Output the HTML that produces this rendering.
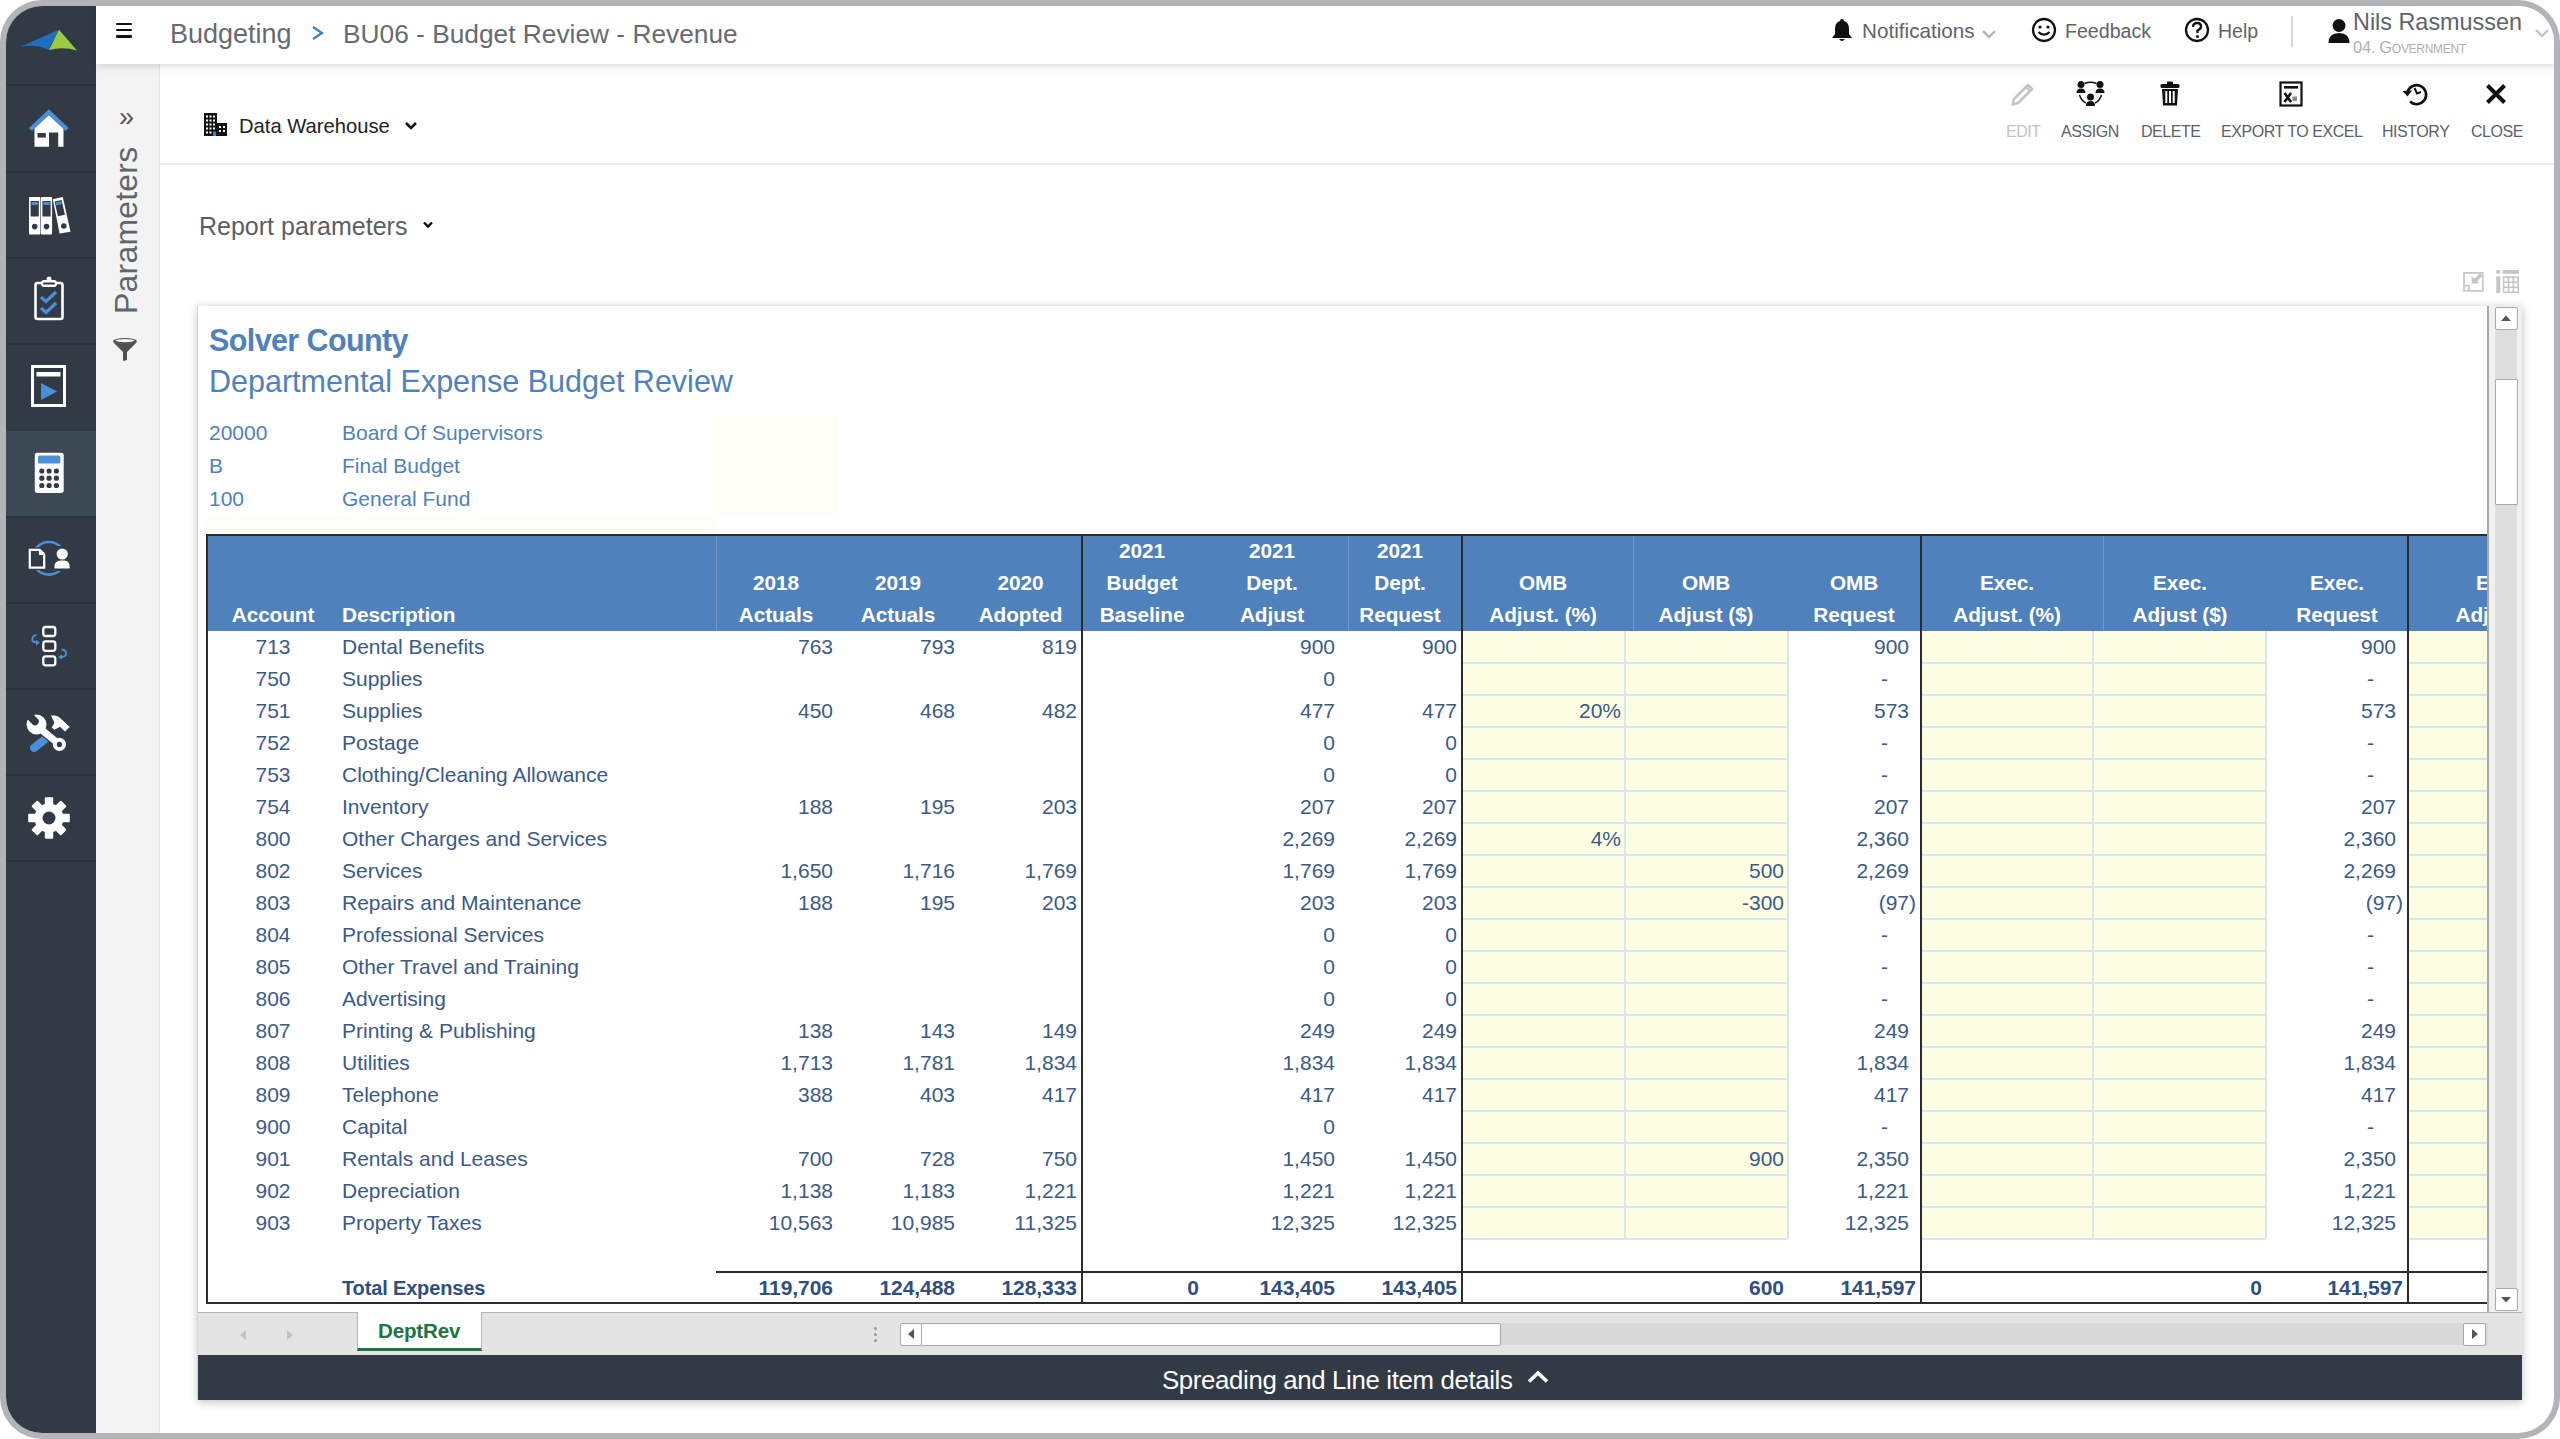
<!DOCTYPE html>
<html><head><meta charset="utf-8">
<style>
*{box-sizing:border-box;margin:0;padding:0}
html,body{width:2560px;height:1439px;overflow:hidden;background:#fff;font-family:"Liberation Sans",sans-serif}
.a{position:absolute}
#outer{position:absolute;left:0;top:0;width:2560px;height:1439px;border-radius:42px;background:#b3b4b8;overflow:hidden}
#inner{position:absolute;left:6px;top:6px;width:2548px;height:1427px;border-radius:36px;overflow:hidden;background:#fff}
#page{position:absolute;left:-6px;top:-6px;width:2560px;height:1439px}
#side{position:absolute;left:0;top:0;width:96px;height:1439px;background:#323a45}
.sep{position:absolute;left:0;width:96px;height:2px;background:#2b323b}
#top{position:absolute;left:96px;top:0;width:2464px;height:64px;background:#fff;box-shadow:0 2px 8px rgba(0,0,0,.15);z-index:5}
#params{position:absolute;left:96px;top:64px;width:64px;height:1375px;background:#f3f3f3;border-right:1px solid #e4e4e4}
.tbl{position:absolute;top:123px;font-size:16px;color:#5b616a;letter-spacing:-0.45px;white-space:nowrap;line-height:18px}
.c{position:absolute;font-size:21px;line-height:32px;white-space:nowrap}
.tt{position:absolute;font-size:21px;color:#5f636a;white-space:nowrap;line-height:24px}
</style></head>
<body>
<div id="outer"><div id="inner"><div id="page">

<!-- ============ SIDEBAR ============ -->
<div id="side">
  <svg class="a" style="left:18px;top:26px" width="64" height="28" viewBox="0 0 64 28">
    <path d="M3 20.5 L41 3.7 L30.5 24 Q20 18 3 20.5Z" fill="#1f6fc0"/>
    <path d="M41 3.7 L59 24.6 Q45 20 31 24Z" fill="#9bcb42"/>
  </svg>
  <div class="sep" style="top:84px"></div>
  <div class="sep" style="top:171px"></div>
  <div class="sep" style="top:257px"></div>
  <div class="sep" style="top:343px"></div>
  <div class="a" style="left:0;top:431px;width:96px;height:85px;background:#3d4855"></div>
  <div class="sep" style="top:516px"></div>
  <div class="sep" style="top:602px"></div>
  <div class="sep" style="top:688px"></div>
  <div class="sep" style="top:774px"></div>
  <div class="sep" style="top:860px"></div>
  <!-- home -->
  <svg class="a" style="left:24px;top:104px" width="50" height="48" viewBox="24 104 50 48">
    <path d="M34.5 126 L48.8 113 L63.5 126 L63.5 146.8 L58.2 146.8 L58.2 132.5 L49 132.5 L49 146.8 L34.5 146.8Z" fill="#fff"/>
    <rect x="37.5" y="133" width="8.3" height="4.6" fill="#323a45"/>
    <path d="M30.5 129.5 L48.8 112.3 L67.2 129.5" fill="none" stroke="#4a8fd8" stroke-width="4.4" stroke-linejoin="miter"/>
  </svg>
  <!-- binders -->
  <svg class="a" style="left:26px;top:194px" width="48" height="44" viewBox="0 0 48 44">
    <rect x="3" y="3" width="11.3" height="37.5" rx="1" fill="#fff"/>
    <rect x="14.8" y="3" width="11.3" height="37.5" rx="1" fill="#fff"/>
    <path d="M26.8 5.2 L36.8 3 L44.5 37.8 L33.6 39.6Z" fill="#fff"/>
    <rect x="4.6" y="7" width="8.2" height="15.5" fill="#323a45"/>
    <rect x="16.4" y="7" width="8.2" height="15.5" fill="#323a45"/>
    <path d="M28.6 7.5 L35.6 6 L38.9 20.8 L31.9 22.3Z" fill="#323a45"/>
    <rect x="5.6" y="8" width="6.2" height="3" fill="#4a8fd8"/>
    <rect x="17.4" y="8" width="6.2" height="3" fill="#4a8fd8"/>
    <path d="M29.6 8.5 L35.2 7.3 L35.8 10 L30.2 11.2Z" fill="#4a8fd8"/>
    <circle cx="8.7" cy="32.6" r="2.8" fill="#323a45"/>
    <circle cx="20.5" cy="32.6" r="2.8" fill="#323a45"/>
    <circle cx="37.8" cy="32" r="2.8" fill="#323a45"/>
  </svg>
  <!-- clipboard -->
  <svg class="a" style="left:30px;top:275px" width="38" height="48" viewBox="0 0 38 48">
    <rect x="5.5" y="8" width="27" height="36" rx="2" fill="none" stroke="#fff" stroke-width="2.6"/>
    <rect x="11" y="5" width="16" height="7" rx="3" fill="#fff"/>
    <circle cx="19" cy="4" r="2.5" fill="#fff"/>
    <rect x="13" y="7.5" width="12" height="2" rx="1" fill="#323a45"/>
    <path d="M11 22 L16 26.5 L26 17" fill="none" stroke="#4a8fd8" stroke-width="3.2"/>
    <path d="M11 33 L16 37.5 L26 28" fill="none" stroke="#4a8fd8" stroke-width="3.2"/>
  </svg>
  <!-- play window -->
  <svg class="a" style="left:29px;top:362px" width="40" height="48" viewBox="0 0 40 48">
    <rect x="3.5" y="4.5" width="32" height="39" fill="none" stroke="#fff" stroke-width="3"/>
    <rect x="7.5" y="10" width="24" height="4.5" fill="#fff"/>
    <path d="M12 21 L28 29.5 L12 38Z" fill="#4a8fd8"/>
  </svg>
  <!-- calculator -->
  <svg class="a" style="left:30px;top:448px" width="38" height="48" viewBox="30 448 38 48">
    <rect x="34.8" y="452.7" width="28.9" height="40.2" rx="2.6" fill="#fff"/>
    <rect x="38" y="455.6" width="22.3" height="8" rx="1.6" fill="#4a8fd8"/>
    <g fill="#323a45">
      <circle cx="41.8" cy="471" r="2.6"/><circle cx="49.1" cy="471" r="2.6"/><circle cx="56.4" cy="471" r="2.6"/>
      <circle cx="41.8" cy="478.2" r="2.6"/><circle cx="49.1" cy="478.2" r="2.6"/><circle cx="56.4" cy="478.2" r="2.6"/>
      <circle cx="41.8" cy="485.5" r="2.6"/><circle cx="49.1" cy="485.5" r="2.6"/><circle cx="56.4" cy="485.5" r="2.6"/>
    </g>
  </svg>
  <!-- doc person -->
  <svg class="a" style="left:24px;top:536px" width="50" height="46" viewBox="24 536 50 46">
    <circle cx="48.9" cy="558.3" r="16.3" fill="none" stroke="#4a8fd8" stroke-width="2.6"/>
    <path d="M27.5 547.5 L40.5 547.5 L46.5 553.5 L46.5 570 L27.5 570Z" fill="#323a45"/>
    <path d="M29.8 549.8 L39.8 549.8 L44.2 554.2 L44.2 567.6 L29.8 567.6Z" fill="#323a45" stroke="#fff" stroke-width="2.2"/>
    <path d="M39.5 550 L39.5 554.5 L44 554.5" fill="#fff" stroke="#fff" stroke-width="1.2"/>
    <rect x="52" y="546" width="19.5" height="25" fill="#323a45"/>
    <circle cx="62.2" cy="554" r="5.6" fill="#fff"/>
    <path d="M54.4 568.6 Q53.8 561 60 560.5 L64.5 560.5 Q70.5 561 69.6 568.6Z" fill="#fff"/>
  </svg>
  <!-- flow -->
  <svg class="a" style="left:26px;top:620px" width="46" height="50" viewBox="26 620 46 50">
    <rect x="43.3" y="627" width="12" height="9" rx="2.3" fill="none" stroke="#fff" stroke-width="2.3"/>
    <rect x="43.3" y="641.3" width="12" height="9.5" rx="2.3" fill="none" stroke="#fff" stroke-width="2.3"/>
    <rect x="43.3" y="656.3" width="12" height="9" rx="2.3" fill="none" stroke="#fff" stroke-width="2.3"/>
    <path d="M36.5 635 Q31.5 636 32.5 640.5 Q33.5 642.5 37 642.5" fill="none" stroke="#4a8fd8" stroke-width="1.9"/>
    <path d="M36 639.8 L40 642.6 L36 645.4Z" fill="#4a8fd8"/>
    <path d="M61.5 649.5 Q67 650 66 654.5 Q65 657 61.5 657" fill="none" stroke="#4a8fd8" stroke-width="1.9"/>
    <path d="M62 654.2 L58 657 L62 659.8Z" fill="#4a8fd8"/>
  </svg>
  <!-- tools -->
  <svg class="a" style="left:24px;top:708px" width="50" height="46" viewBox="24 708 50 46">
    <path d="M46 738.5 L34 748" stroke="#4a8fd8" stroke-width="8" stroke-linecap="round"/>
    <path d="M50 715 L55 714.7 Q59 715.5 62.5 719.4 L70.6 726.9 L65 732.5 L60 727.5 L54.4 730.6 L51 727.5 L53.8 723 Z" fill="#fff" stroke="#323a45" stroke-width="1.2"/>
    <g>
      <path d="M43 731 L59.4 744.4" stroke="#323a45" stroke-width="9.5" stroke-linecap="round"/>
      <circle cx="36.5" cy="724.5" r="11.2" fill="#323a45"/>
      <path d="M43 731 L59.4 744.4" stroke="#fff" stroke-width="7" stroke-linecap="round"/>
      <circle cx="36.5" cy="724.5" r="10" fill="#fff"/>
      <circle cx="59.4" cy="744.4" r="6.6" fill="#fff"/>
      <path d="M35 721.5 L23 709.5" stroke="#323a45" stroke-width="7.5" stroke-linecap="round"/>
      <circle cx="59.4" cy="744.4" r="2.6" fill="#323a45"/>
    </g>
  </svg>
  <!-- gear -->
  <svg class="a" style="left:27px;top:796px" width="44" height="44" viewBox="-22 -22 44 44">
    <g fill="#fff">
      <circle r="14.5"/>
      <rect x="-4.2" y="-20.8" width="8.4" height="9" rx="1"/>
      <rect x="-4.2" y="-20.8" width="8.4" height="9" rx="1" transform="rotate(45)"/>
      <rect x="-4.2" y="-20.8" width="8.4" height="9" rx="1" transform="rotate(90)"/>
      <rect x="-4.2" y="-20.8" width="8.4" height="9" rx="1" transform="rotate(135)"/>
      <rect x="-4.2" y="-20.8" width="8.4" height="9" rx="1" transform="rotate(180)"/>
      <rect x="-4.2" y="-20.8" width="8.4" height="9" rx="1" transform="rotate(225)"/>
      <rect x="-4.2" y="-20.8" width="8.4" height="9" rx="1" transform="rotate(270)"/>
      <rect x="-4.2" y="-20.8" width="8.4" height="9" rx="1" transform="rotate(315)"/>
    </g>
    <circle r="6.5" fill="#323a45"/>
  </svg>
</div>

<!-- ============ TOP BAR ============ -->
<div id="top"></div>
<div class="a" style="left:0;top:0;width:2560px;height:64px;z-index:6">
  <!-- hamburger -->
  <div class="a" style="left:116px;top:23px;width:16px;height:2.3px;background:#111;border-radius:1px"></div>
  <div class="a" style="left:116px;top:29.2px;width:16px;height:2.3px;background:#111;border-radius:1px"></div>
  <div class="a" style="left:116px;top:35.4px;width:16px;height:2.3px;background:#111;border-radius:1px"></div>
  <div class="tt" style="left:170px;top:18.5px;font-size:27px;line-height:30px;color:#676b71">Budgeting</div>
  <svg class="a" style="left:311px;top:25px" width="14" height="16" viewBox="0 0 14 16"><path d="M2 2 L11 8 L2 14" fill="none" stroke="#2f7fd6" stroke-width="2.2"/></svg>
  <div class="tt" style="left:343px;top:18.5px;font-size:26.3px;line-height:30px;color:#676b71">BU06 - Budget Review - Revenue</div>

  <!-- notifications -->
  <svg class="a" style="left:1830px;top:17px" width="24" height="26" viewBox="0 0 24 26">
    <path d="M12 2 Q14 2 14 4 Q19 5.5 19 12 L19 17 L22 21 L2 21 L5 17 L5 12 Q5 5.5 10 4 Q10 2 12 2Z" fill="#111"/>
    <path d="M9 22 Q12 26 15 22Z" fill="#111"/>
  </svg>
  <div class="tt" style="left:1862px;top:19px;font-size:20.7px;color:#5f636a">Notifications</div>
  <svg class="a" style="left:1981px;top:28px" width="16" height="12" viewBox="0 0 16 12"><path d="M2 3 L8 9 L14 3" fill="none" stroke="#b5b5b5" stroke-width="2.4"/></svg>
  <!-- feedback -->
  <svg class="a" style="left:2030px;top:17px" width="28" height="26" viewBox="0 0 28 26">
    <circle cx="14" cy="13" r="11" fill="none" stroke="#111" stroke-width="2.3"/>
    <circle cx="10" cy="10" r="1.6" fill="#111"/><circle cx="18" cy="10" r="1.6" fill="#111"/>
    <path d="M8.5 15 Q14 20.5 19.5 15" fill="none" stroke="#111" stroke-width="2.2"/>
  </svg>
  <div class="tt" style="left:2065px;top:19px;font-size:19.6px;color:#5f636a">Feedback</div>
  <!-- help -->
  <svg class="a" style="left:2183px;top:17px" width="28" height="26" viewBox="0 0 28 26">
    <circle cx="14" cy="13" r="11" fill="none" stroke="#111" stroke-width="2.3"/>
    <path d="M10 10 Q10 6 14 6 Q18 6 18 9.5 Q18 12 14.5 13.5 L14.5 16" fill="none" stroke="#111" stroke-width="2.4"/>
    <circle cx="14.5" cy="19.5" r="1.6" fill="#111"/>
  </svg>
  <div class="tt" style="left:2218px;top:19px;font-size:19.5px;color:#5f636a">Help</div>
  <div class="a" style="left:2291px;top:16px;width:1.5px;height:31px;background:#d8d8d8"></div>
  <!-- user -->
  <svg class="a" style="left:2327px;top:18px" width="24" height="27" viewBox="0 0 24 27">
    <circle cx="12" cy="7.5" r="6.5" fill="#111"/>
    <path d="M1.5 25 Q1.5 15 12 15 Q22.5 15 22.5 25Z" fill="#111"/>
  </svg>
  <div class="tt" style="left:2353px;top:9px;font-size:23.4px;line-height:26px;color:#5f636a">Nils Rasmussen</div>
  <div class="tt" style="left:2353px;top:39px;font-size:16.5px;line-height:16px;color:#b0b0b0;font-variant:small-caps;letter-spacing:-0.3px">04. Government</div>
  <svg class="a" style="left:2534px;top:27px" width="16" height="12" viewBox="0 0 16 12"><path d="M2 3 L8 9 L14 3" fill="none" stroke="#c4c4c4" stroke-width="2.4"/></svg>
</div>

<!-- ============ PARAMS PANEL ============ -->
<div id="params"></div>
<div class="a" style="left:119px;top:104px;font-size:27px;color:#555;line-height:27px">&#187;</div>
<div class="a" style="left:110px;top:314px;transform-origin:0 0;transform:rotate(-90deg);font-size:32px;line-height:32px;color:#60656b;white-space:nowrap;letter-spacing:0.2px">Parameters</div>
<svg class="a" style="left:111px;top:337px" width="28" height="26" viewBox="0 0 28 26">
  <ellipse cx="14" cy="4" rx="12" ry="3" fill="#505050"/>
  <ellipse cx="14" cy="3.6" rx="9.5" ry="1.6" fill="#f3f3f3"/>
  <path d="M2 5 L12 15 L12 24 L16 23 L16 15 L26 5 Q14 8 2 5Z" fill="#505050"/>
</svg>

<!-- ============ TOOLBAR ============ -->
<div class="a" style="left:160px;top:163px;width:2400px;height:1.5px;background:#ececec"></div>
<svg class="a" style="left:203px;top:112px" width="26" height="26" viewBox="0 0 26 26">
  <rect x="1" y="1" width="13" height="23" fill="#111"/>
  <rect x="14" y="11" width="10" height="13" fill="#111"/>
  <g fill="#fff">
    <rect x="3" y="3.5" width="2" height="2"/><rect x="6.5" y="3.5" width="2" height="2"/><rect x="10" y="3.5" width="2" height="2"/>
    <rect x="3" y="7.5" width="2" height="2"/><rect x="6.5" y="7.5" width="2" height="2"/><rect x="10" y="7.5" width="2" height="2"/>
    <rect x="3" y="11.5" width="2" height="2"/><rect x="6.5" y="11.5" width="2" height="2"/><rect x="10" y="11.5" width="2" height="2"/>
    <rect x="3" y="15.5" width="2" height="2"/><rect x="6.5" y="15.5" width="2" height="2"/><rect x="10" y="15.5" width="2" height="2"/>
    <rect x="3" y="19.5" width="2" height="2"/><rect x="6.5" y="19.5" width="2" height="2"/>
    <rect x="16" y="14" width="2" height="2"/><rect x="20" y="14" width="2" height="2"/>
    <rect x="16" y="18" width="2" height="2"/><rect x="20" y="18" width="2" height="2"/>
  </g>
  <rect x="10" y="19.5" width="3" height="4.5" fill="#3a7fd0"/>
</svg>
<div class="tt" style="left:239px;top:114px;font-size:20.2px;color:#222">Data Warehouse</div>
<svg class="a" style="left:403px;top:119px" width="16" height="14" viewBox="0 0 16 14"><path d="M3 4 L8 9 L13 4" fill="none" stroke="#111" stroke-width="2.6"/></svg>

<!-- toolbar buttons -->
<svg class="a" style="left:2009px;top:81px" width="27" height="26" viewBox="0 0 27 26">
  <path d="M5 18 L19 4 L23 8 L9 22 L3.5 23.5Z" fill="none" stroke="#c4c4c4" stroke-width="2.6" stroke-linejoin="round"/>
  <path d="M17 6 L21 10" stroke="#c4c4c4" stroke-width="2"/>
</svg>
<div class="tbl" style="left:2006px;color:#c2c2c2">EDIT</div>
<svg class="a" style="left:2076px;top:80px" width="29" height="28" viewBox="0 0 29 28">
  <g fill="#111">
    <circle cx="5" cy="4.5" r="3.5"/><path d="M0.5 13 Q0.5 8.5 5 8.5 Q9.5 8.5 9.5 13Z"/>
    <circle cx="24" cy="4.5" r="3.5"/><path d="M19.5 13 Q19.5 8.5 24 8.5 Q28.5 8.5 28.5 13Z"/>
    <circle cx="14.5" cy="17" r="3.5"/><path d="M10 26 Q10 21 14.5 21 Q19 21 19 26Z"/>
  </g>
  <path d="M8.5 3.5 Q14.5 1 20.5 3.5" fill="none" stroke="#111" stroke-width="1.5"/>
  <path d="M3.5 15 Q5.5 21 10 23" fill="none" stroke="#111" stroke-width="1.5"/>
  <path d="M25.5 15 Q23.5 21 19 23" fill="none" stroke="#111" stroke-width="1.5"/>
</svg>
<div class="tbl" style="left:2061px">ASSIGN</div>
<svg class="a" style="left:2159px;top:81px" width="22" height="26" viewBox="0 0 22 26">
  <rect x="1.5" y="3" width="19" height="4" rx="1.5" fill="#111"/>
  <rect x="8" y="0.5" width="6" height="3" rx="1" fill="#111"/>
  <path d="M3 8 L19 8 L18 24.5 L4 24.5Z" fill="#111"/>
  <rect x="6.3" y="10" width="2" height="12" fill="#fff"/><rect x="10" y="10" width="2" height="12" fill="#fff"/><rect x="13.7" y="10" width="2" height="12" fill="#fff"/>
</svg>
<div class="tbl" style="left:2141px">DELETE</div>
<svg class="a" style="left:2278px;top:80px" width="26" height="28" viewBox="0 0 26 28">
  <rect x="2.5" y="2.5" width="21" height="23" fill="none" stroke="#111" stroke-width="2.2"/>
  <rect x="6" y="6" width="14" height="2.6" fill="#111"/>
  <path d="M6.5 13 L13 22 M13 13 L6.5 22" stroke="#111" stroke-width="2.6"/>
  <rect x="14.5" y="16.5" width="4.5" height="4.5" fill="#888"/>
</svg>
<div class="tbl" style="left:2221px">EXPORT TO EXCEL</div>
<svg class="a" style="left:2401px;top:82px" width="30" height="26" viewBox="0 0 30 26">
  <path d="M6.5 10 A9.5 9.5 0 1 1 9 19.5" fill="none" stroke="#111" stroke-width="2.6"/>
  <path d="M1.5 9 L6.5 14.5 L11 8.5Z" fill="#111"/>
  <path d="M13.5 6 L16 11.5 L20 10" fill="none" stroke="#111" stroke-width="2"/>
</svg>
<div class="tbl" style="left:2382px">HISTORY</div>
<svg class="a" style="left:2484px;top:82px" width="24" height="24" viewBox="0 0 24 24">
  <path d="M3.5 3.5 L20.5 20.5 M20.5 3.5 L3.5 20.5" stroke="#111" stroke-width="4"/>
</svg>
<div class="tbl" style="left:2471px">CLOSE</div>

<!-- report params -->
<div class="tt" style="left:199px;top:211px;font-size:25px;line-height:30px;color:#5a5e64">Report parameters</div>
<svg class="a" style="left:421px;top:219px" width="14" height="12" viewBox="0 0 14 12"><path d="M3 3.5 L7 7.5 L11 3.5" fill="none" stroke="#111" stroke-width="2.4"/></svg>

<!-- two small icons -->
<svg class="a" style="left:2458px;top:266px" width="66" height="32" viewBox="2458 266 66 32">
  <g fill="none" stroke="#c6c6c6" stroke-width="1.7">
    <path d="M2464 285 L2464 272.8 L2482.8 272.8 L2482.8 290.8 L2469.5 290.8"/>
    <rect x="2464" y="285.6" width="4.9" height="5.2"/>
    <path d="M2481.2 274.6 L2474.5 281.3" stroke-width="3.6"/>
  </g>
  <path d="M2471.6 275.8 L2471.6 283.5 L2479.3 283.5Z" fill="#c6c6c6"/>
  <g fill="#c6c6c6">
    <rect x="2496.3" y="270" width="4" height="3.8" rx="1"/>
    <rect x="2496.3" y="276.3" width="4" height="16.8"/>
    <rect x="2502.6" y="270" width="16.4" height="3.8"/>
  </g>
  <g fill="none" stroke="#c6c6c6" stroke-width="1.6">
    <rect x="2503.6" y="277.1" width="14.6" height="15.2"/>
    <path d="M2508.5 277 V292.3 M2513.4 277 V292.3 M2503.6 282.2 H2518.2 M2503.6 287.3 H2518.2"/>
  </g>
</svg>

<!-- ============ SPREADSHEET ============ -->
<div id="sheetwrap" class="a" style="left:198px;top:306px;width:2324px;height:1094px;background:#fff;box-shadow:-1px 0 0 #d6d6d6, 0 2px 9px rgba(0,0,0,.26)">
  <div id="grid" class="a" style="left:0;top:0;width:2290px;height:1006px;overflow:hidden;background:#fff">
<div class="c" style="left:11.0px;top:15.5px;font-size:30.5px;line-height:36px;font-weight:bold;color:#4f81bd;letter-spacing:-0.6px">Solver County</div>
<div class="c" style="left:11.0px;top:56.5px;font-size:30.5px;line-height:36px;color:#4f81bd">Departmental Expense Budget Review</div>
<div class="c" style="left:11.0px;top:110.7px;color:#4f81bd">20000</div>
<div class="c" style="left:144.0px;top:110.7px;color:#4f81bd">Board Of Supervisors</div>
<div class="c" style="left:11.0px;top:144.0px;color:#4f81bd">B</div>
<div class="c" style="left:144.0px;top:144.0px;color:#4f81bd">Final Budget</div>
<div class="c" style="left:11.0px;top:177.3px;color:#4f81bd">100</div>
<div class="c" style="left:144.0px;top:177.3px;color:#4f81bd">General Fund</div>
<div class="a" style="left:518.0px;top:110.0px;width:122.0px;height:100.0px;background:#fefef6"></div>
<div class="a" style="left:8.0px;top:212.0px;width:510.0px;height:16.0px;background:#fefef8"></div>
<div class="a" style="left:8.0px;top:228.0px;width:2290.0px;height:2.0px;background:#2b2b2b"></div>
<div class="a" style="left:8.0px;top:230.0px;width:2290.0px;height:95.0px;background:#4f81bd"></div>
<div class="a" style="left:518.0px;top:230.0px;width:1.0px;height:95.0px;background:#6f98c8"></div>
<div class="a" style="left:1150.0px;top:230.0px;width:1.0px;height:95.0px;background:#6f98c8"></div>
<div class="a" style="left:1435.0px;top:230.0px;width:1.0px;height:95.0px;background:#6f98c8"></div>
<div class="a" style="left:1905.0px;top:230.0px;width:1.0px;height:95.0px;background:#6f98c8"></div>
<div class="c" style="left:-35.0px;top:293.0px;width:220px;text-align:center;color:#fff;font-weight:bold;font-size:20.8px;letter-spacing:-0.1px">Account</div>
<div class="c" style="left:144.0px;top:293.0px;color:#fff;font-weight:bold;font-size:20.8px;letter-spacing:-0.1px">Description</div>
<div class="c" style="left:468.0px;top:261.0px;width:220px;text-align:center;color:#fff;font-weight:bold;font-size:20.8px;letter-spacing:-0.1px">2018</div>
<div class="c" style="left:468.0px;top:293.0px;width:220px;text-align:center;color:#fff;font-weight:bold;font-size:20.8px;letter-spacing:-0.1px">Actuals</div>
<div class="c" style="left:590.0px;top:261.0px;width:220px;text-align:center;color:#fff;font-weight:bold;font-size:20.8px;letter-spacing:-0.1px">2019</div>
<div class="c" style="left:590.0px;top:293.0px;width:220px;text-align:center;color:#fff;font-weight:bold;font-size:20.8px;letter-spacing:-0.1px">Actuals</div>
<div class="c" style="left:712.5px;top:261.0px;width:220px;text-align:center;color:#fff;font-weight:bold;font-size:20.8px;letter-spacing:-0.1px">2020</div>
<div class="c" style="left:712.5px;top:293.0px;width:220px;text-align:center;color:#fff;font-weight:bold;font-size:20.8px;letter-spacing:-0.1px">Adopted</div>
<div class="c" style="left:834.0px;top:229.0px;width:220px;text-align:center;color:#fff;font-weight:bold;font-size:20.8px;letter-spacing:-0.1px">2021</div>
<div class="c" style="left:834.0px;top:261.0px;width:220px;text-align:center;color:#fff;font-weight:bold;font-size:20.8px;letter-spacing:-0.1px">Budget</div>
<div class="c" style="left:834.0px;top:293.0px;width:220px;text-align:center;color:#fff;font-weight:bold;font-size:20.8px;letter-spacing:-0.1px">Baseline</div>
<div class="c" style="left:964.0px;top:229.0px;width:220px;text-align:center;color:#fff;font-weight:bold;font-size:20.8px;letter-spacing:-0.1px">2021</div>
<div class="c" style="left:964.0px;top:261.0px;width:220px;text-align:center;color:#fff;font-weight:bold;font-size:20.8px;letter-spacing:-0.1px">Dept.</div>
<div class="c" style="left:964.0px;top:293.0px;width:220px;text-align:center;color:#fff;font-weight:bold;font-size:20.8px;letter-spacing:-0.1px">Adjust</div>
<div class="c" style="left:1092.0px;top:229.0px;width:220px;text-align:center;color:#fff;font-weight:bold;font-size:20.8px;letter-spacing:-0.1px">2021</div>
<div class="c" style="left:1092.0px;top:261.0px;width:220px;text-align:center;color:#fff;font-weight:bold;font-size:20.8px;letter-spacing:-0.1px">Dept.</div>
<div class="c" style="left:1092.0px;top:293.0px;width:220px;text-align:center;color:#fff;font-weight:bold;font-size:20.8px;letter-spacing:-0.1px">Request</div>
<div class="c" style="left:1235.0px;top:261.0px;width:220px;text-align:center;color:#fff;font-weight:bold;font-size:20.8px;letter-spacing:-0.1px">OMB</div>
<div class="c" style="left:1235.0px;top:293.0px;width:220px;text-align:center;color:#fff;font-weight:bold;font-size:20.8px;letter-spacing:-0.1px">Adjust. (%)</div>
<div class="c" style="left:1398.0px;top:261.0px;width:220px;text-align:center;color:#fff;font-weight:bold;font-size:20.8px;letter-spacing:-0.1px">OMB</div>
<div class="c" style="left:1398.0px;top:293.0px;width:220px;text-align:center;color:#fff;font-weight:bold;font-size:20.8px;letter-spacing:-0.1px">Adjust ($)</div>
<div class="c" style="left:1546.0px;top:261.0px;width:220px;text-align:center;color:#fff;font-weight:bold;font-size:20.8px;letter-spacing:-0.1px">OMB</div>
<div class="c" style="left:1546.0px;top:293.0px;width:220px;text-align:center;color:#fff;font-weight:bold;font-size:20.8px;letter-spacing:-0.1px">Request</div>
<div class="c" style="left:1699.0px;top:261.0px;width:220px;text-align:center;color:#fff;font-weight:bold;font-size:20.8px;letter-spacing:-0.1px">Exec.</div>
<div class="c" style="left:1699.0px;top:293.0px;width:220px;text-align:center;color:#fff;font-weight:bold;font-size:20.8px;letter-spacing:-0.1px">Adjust. (%)</div>
<div class="c" style="left:1872.0px;top:261.0px;width:220px;text-align:center;color:#fff;font-weight:bold;font-size:20.8px;letter-spacing:-0.1px">Exec.</div>
<div class="c" style="left:1872.0px;top:293.0px;width:220px;text-align:center;color:#fff;font-weight:bold;font-size:20.8px;letter-spacing:-0.1px">Adjust ($)</div>
<div class="c" style="left:2029.0px;top:261.0px;width:220px;text-align:center;color:#fff;font-weight:bold;font-size:20.8px;letter-spacing:-0.1px">Exec.</div>
<div class="c" style="left:2029.0px;top:293.0px;width:220px;text-align:center;color:#fff;font-weight:bold;font-size:20.8px;letter-spacing:-0.1px">Request</div>
<div class="c" style="left:2195.0px;top:261.0px;width:220px;text-align:center;color:#fff;font-weight:bold;font-size:20.8px;letter-spacing:-0.1px">Exec.</div>
<div class="c" style="left:2195.0px;top:293.0px;width:220px;text-align:center;color:#fff;font-weight:bold;font-size:20.8px;letter-spacing:-0.1px">Adjust ($)</div>
<div class="a" style="left:1264.0px;top:325.0px;width:163.0px;height:608.0px;background:#fefee2"></div>
<div class="a" style="left:1427.0px;top:325.0px;width:163.0px;height:608.0px;background:#fefee2"></div>
<div class="a" style="left:1723.0px;top:325.0px;width:172.0px;height:608.0px;background:#fefee2"></div>
<div class="a" style="left:1895.0px;top:325.0px;width:173.0px;height:608.0px;background:#fefee2"></div>
<div class="a" style="left:2210.0px;top:325.0px;width:80.0px;height:608.0px;background:#fefee2"></div>
<div class="a" style="left:1426.0px;top:325.0px;width:1.5px;height:608.0px;background:#dbe5ec"></div>
<div class="a" style="left:1894.0px;top:325.0px;width:1.5px;height:608.0px;background:#dbe5ec"></div>
<div class="a" style="left:1589.0px;top:325.0px;width:1.5px;height:608.0px;background:#dbe5ec"></div>
<div class="a" style="left:2067.0px;top:325.0px;width:1.5px;height:608.0px;background:#dbe5ec"></div>
<div class="a" style="left:1264.0px;top:356.0px;width:326.0px;height:1.5px;background:#dbe5ec"></div>
<div class="a" style="left:1723.0px;top:356.0px;width:345.0px;height:1.5px;background:#dbe5ec"></div>
<div class="a" style="left:2210.0px;top:356.0px;width:80.0px;height:1.5px;background:#dbe5ec"></div>
<div class="a" style="left:1264.0px;top:388.0px;width:326.0px;height:1.5px;background:#dbe5ec"></div>
<div class="a" style="left:1723.0px;top:388.0px;width:345.0px;height:1.5px;background:#dbe5ec"></div>
<div class="a" style="left:2210.0px;top:388.0px;width:80.0px;height:1.5px;background:#dbe5ec"></div>
<div class="a" style="left:1264.0px;top:420.0px;width:326.0px;height:1.5px;background:#dbe5ec"></div>
<div class="a" style="left:1723.0px;top:420.0px;width:345.0px;height:1.5px;background:#dbe5ec"></div>
<div class="a" style="left:2210.0px;top:420.0px;width:80.0px;height:1.5px;background:#dbe5ec"></div>
<div class="a" style="left:1264.0px;top:452.0px;width:326.0px;height:1.5px;background:#dbe5ec"></div>
<div class="a" style="left:1723.0px;top:452.0px;width:345.0px;height:1.5px;background:#dbe5ec"></div>
<div class="a" style="left:2210.0px;top:452.0px;width:80.0px;height:1.5px;background:#dbe5ec"></div>
<div class="a" style="left:1264.0px;top:484.0px;width:326.0px;height:1.5px;background:#dbe5ec"></div>
<div class="a" style="left:1723.0px;top:484.0px;width:345.0px;height:1.5px;background:#dbe5ec"></div>
<div class="a" style="left:2210.0px;top:484.0px;width:80.0px;height:1.5px;background:#dbe5ec"></div>
<div class="a" style="left:1264.0px;top:516.0px;width:326.0px;height:1.5px;background:#dbe5ec"></div>
<div class="a" style="left:1723.0px;top:516.0px;width:345.0px;height:1.5px;background:#dbe5ec"></div>
<div class="a" style="left:2210.0px;top:516.0px;width:80.0px;height:1.5px;background:#dbe5ec"></div>
<div class="a" style="left:1264.0px;top:548.0px;width:326.0px;height:1.5px;background:#dbe5ec"></div>
<div class="a" style="left:1723.0px;top:548.0px;width:345.0px;height:1.5px;background:#dbe5ec"></div>
<div class="a" style="left:2210.0px;top:548.0px;width:80.0px;height:1.5px;background:#dbe5ec"></div>
<div class="a" style="left:1264.0px;top:580.0px;width:326.0px;height:1.5px;background:#dbe5ec"></div>
<div class="a" style="left:1723.0px;top:580.0px;width:345.0px;height:1.5px;background:#dbe5ec"></div>
<div class="a" style="left:2210.0px;top:580.0px;width:80.0px;height:1.5px;background:#dbe5ec"></div>
<div class="a" style="left:1264.0px;top:612.0px;width:326.0px;height:1.5px;background:#dbe5ec"></div>
<div class="a" style="left:1723.0px;top:612.0px;width:345.0px;height:1.5px;background:#dbe5ec"></div>
<div class="a" style="left:2210.0px;top:612.0px;width:80.0px;height:1.5px;background:#dbe5ec"></div>
<div class="a" style="left:1264.0px;top:644.0px;width:326.0px;height:1.5px;background:#dbe5ec"></div>
<div class="a" style="left:1723.0px;top:644.0px;width:345.0px;height:1.5px;background:#dbe5ec"></div>
<div class="a" style="left:2210.0px;top:644.0px;width:80.0px;height:1.5px;background:#dbe5ec"></div>
<div class="a" style="left:1264.0px;top:676.0px;width:326.0px;height:1.5px;background:#dbe5ec"></div>
<div class="a" style="left:1723.0px;top:676.0px;width:345.0px;height:1.5px;background:#dbe5ec"></div>
<div class="a" style="left:2210.0px;top:676.0px;width:80.0px;height:1.5px;background:#dbe5ec"></div>
<div class="a" style="left:1264.0px;top:708.0px;width:326.0px;height:1.5px;background:#dbe5ec"></div>
<div class="a" style="left:1723.0px;top:708.0px;width:345.0px;height:1.5px;background:#dbe5ec"></div>
<div class="a" style="left:2210.0px;top:708.0px;width:80.0px;height:1.5px;background:#dbe5ec"></div>
<div class="a" style="left:1264.0px;top:740.0px;width:326.0px;height:1.5px;background:#dbe5ec"></div>
<div class="a" style="left:1723.0px;top:740.0px;width:345.0px;height:1.5px;background:#dbe5ec"></div>
<div class="a" style="left:2210.0px;top:740.0px;width:80.0px;height:1.5px;background:#dbe5ec"></div>
<div class="a" style="left:1264.0px;top:772.0px;width:326.0px;height:1.5px;background:#dbe5ec"></div>
<div class="a" style="left:1723.0px;top:772.0px;width:345.0px;height:1.5px;background:#dbe5ec"></div>
<div class="a" style="left:2210.0px;top:772.0px;width:80.0px;height:1.5px;background:#dbe5ec"></div>
<div class="a" style="left:1264.0px;top:804.0px;width:326.0px;height:1.5px;background:#dbe5ec"></div>
<div class="a" style="left:1723.0px;top:804.0px;width:345.0px;height:1.5px;background:#dbe5ec"></div>
<div class="a" style="left:2210.0px;top:804.0px;width:80.0px;height:1.5px;background:#dbe5ec"></div>
<div class="a" style="left:1264.0px;top:836.0px;width:326.0px;height:1.5px;background:#dbe5ec"></div>
<div class="a" style="left:1723.0px;top:836.0px;width:345.0px;height:1.5px;background:#dbe5ec"></div>
<div class="a" style="left:2210.0px;top:836.0px;width:80.0px;height:1.5px;background:#dbe5ec"></div>
<div class="a" style="left:1264.0px;top:868.0px;width:326.0px;height:1.5px;background:#dbe5ec"></div>
<div class="a" style="left:1723.0px;top:868.0px;width:345.0px;height:1.5px;background:#dbe5ec"></div>
<div class="a" style="left:2210.0px;top:868.0px;width:80.0px;height:1.5px;background:#dbe5ec"></div>
<div class="a" style="left:1264.0px;top:900.0px;width:326.0px;height:1.5px;background:#dbe5ec"></div>
<div class="a" style="left:1723.0px;top:900.0px;width:345.0px;height:1.5px;background:#dbe5ec"></div>
<div class="a" style="left:2210.0px;top:900.0px;width:80.0px;height:1.5px;background:#dbe5ec"></div>
<div class="a" style="left:1264.0px;top:932.0px;width:326.0px;height:1.5px;background:#dbe5ec"></div>
<div class="a" style="left:1723.0px;top:932.0px;width:345.0px;height:1.5px;background:#dbe5ec"></div>
<div class="a" style="left:2210.0px;top:932.0px;width:80.0px;height:1.5px;background:#dbe5ec"></div>
<div class="c" style="left:15.0px;top:325.0px;width:120px;text-align:center;color:#3a5a88">713</div>
<div class="c" style="left:144.0px;top:325.0px;color:#3a5a88">Dental Benefits</div>
<div class="c" style="right:1655.0px;top:325.0px;color:#3a5a88">763</div>
<div class="c" style="right:1533.0px;top:325.0px;color:#3a5a88">793</div>
<div class="c" style="right:1411.0px;top:325.0px;color:#3a5a88">819</div>
<div class="c" style="right:1153.0px;top:325.0px;color:#3a5a88">900</div>
<div class="c" style="right:1031.0px;top:325.0px;color:#3a5a88">900</div>
<div class="c" style="right:579.0px;top:325.0px;color:#3a5a88">900</div>
<div class="c" style="right:92.0px;top:325.0px;color:#3a5a88">900</div>
<div class="c" style="left:15.0px;top:357.0px;width:120px;text-align:center;color:#3a5a88">750</div>
<div class="c" style="left:144.0px;top:357.0px;color:#3a5a88">Supplies</div>
<div class="c" style="right:1153.0px;top:357.0px;color:#3a5a88">0</div>
<div class="c" style="right:600.0px;top:357.0px;color:#3a5a88">-</div>
<div class="c" style="right:114.0px;top:357.0px;color:#3a5a88">-</div>
<div class="c" style="left:15.0px;top:389.0px;width:120px;text-align:center;color:#3a5a88">751</div>
<div class="c" style="left:144.0px;top:389.0px;color:#3a5a88">Supplies</div>
<div class="c" style="right:1655.0px;top:389.0px;color:#3a5a88">450</div>
<div class="c" style="right:1533.0px;top:389.0px;color:#3a5a88">468</div>
<div class="c" style="right:1411.0px;top:389.0px;color:#3a5a88">482</div>
<div class="c" style="right:1153.0px;top:389.0px;color:#3a5a88">477</div>
<div class="c" style="right:1031.0px;top:389.0px;color:#3a5a88">477</div>
<div class="c" style="right:867.0px;top:389.0px;color:#3a5a88">20%</div>
<div class="c" style="right:579.0px;top:389.0px;color:#3a5a88">573</div>
<div class="c" style="right:92.0px;top:389.0px;color:#3a5a88">573</div>
<div class="c" style="left:15.0px;top:421.0px;width:120px;text-align:center;color:#3a5a88">752</div>
<div class="c" style="left:144.0px;top:421.0px;color:#3a5a88">Postage</div>
<div class="c" style="right:1153.0px;top:421.0px;color:#3a5a88">0</div>
<div class="c" style="right:1031.0px;top:421.0px;color:#3a5a88">0</div>
<div class="c" style="right:600.0px;top:421.0px;color:#3a5a88">-</div>
<div class="c" style="right:114.0px;top:421.0px;color:#3a5a88">-</div>
<div class="c" style="left:15.0px;top:453.0px;width:120px;text-align:center;color:#3a5a88">753</div>
<div class="c" style="left:144.0px;top:453.0px;color:#3a5a88">Clothing/Cleaning Allowance</div>
<div class="c" style="right:1153.0px;top:453.0px;color:#3a5a88">0</div>
<div class="c" style="right:1031.0px;top:453.0px;color:#3a5a88">0</div>
<div class="c" style="right:600.0px;top:453.0px;color:#3a5a88">-</div>
<div class="c" style="right:114.0px;top:453.0px;color:#3a5a88">-</div>
<div class="c" style="left:15.0px;top:485.0px;width:120px;text-align:center;color:#3a5a88">754</div>
<div class="c" style="left:144.0px;top:485.0px;color:#3a5a88">Inventory</div>
<div class="c" style="right:1655.0px;top:485.0px;color:#3a5a88">188</div>
<div class="c" style="right:1533.0px;top:485.0px;color:#3a5a88">195</div>
<div class="c" style="right:1411.0px;top:485.0px;color:#3a5a88">203</div>
<div class="c" style="right:1153.0px;top:485.0px;color:#3a5a88">207</div>
<div class="c" style="right:1031.0px;top:485.0px;color:#3a5a88">207</div>
<div class="c" style="right:579.0px;top:485.0px;color:#3a5a88">207</div>
<div class="c" style="right:92.0px;top:485.0px;color:#3a5a88">207</div>
<div class="c" style="left:15.0px;top:517.0px;width:120px;text-align:center;color:#3a5a88">800</div>
<div class="c" style="left:144.0px;top:517.0px;color:#3a5a88">Other Charges and Services</div>
<div class="c" style="right:1153.0px;top:517.0px;color:#3a5a88">2,269</div>
<div class="c" style="right:1031.0px;top:517.0px;color:#3a5a88">2,269</div>
<div class="c" style="right:867.0px;top:517.0px;color:#3a5a88">4%</div>
<div class="c" style="right:579.0px;top:517.0px;color:#3a5a88">2,360</div>
<div class="c" style="right:92.0px;top:517.0px;color:#3a5a88">2,360</div>
<div class="c" style="left:15.0px;top:549.0px;width:120px;text-align:center;color:#3a5a88">802</div>
<div class="c" style="left:144.0px;top:549.0px;color:#3a5a88">Services</div>
<div class="c" style="right:1655.0px;top:549.0px;color:#3a5a88">1,650</div>
<div class="c" style="right:1533.0px;top:549.0px;color:#3a5a88">1,716</div>
<div class="c" style="right:1411.0px;top:549.0px;color:#3a5a88">1,769</div>
<div class="c" style="right:1153.0px;top:549.0px;color:#3a5a88">1,769</div>
<div class="c" style="right:1031.0px;top:549.0px;color:#3a5a88">1,769</div>
<div class="c" style="right:704.0px;top:549.0px;color:#3a5a88">500</div>
<div class="c" style="right:579.0px;top:549.0px;color:#3a5a88">2,269</div>
<div class="c" style="right:92.0px;top:549.0px;color:#3a5a88">2,269</div>
<div class="c" style="left:15.0px;top:581.0px;width:120px;text-align:center;color:#3a5a88">803</div>
<div class="c" style="left:144.0px;top:581.0px;color:#3a5a88">Repairs and Maintenance</div>
<div class="c" style="right:1655.0px;top:581.0px;color:#3a5a88">188</div>
<div class="c" style="right:1533.0px;top:581.0px;color:#3a5a88">195</div>
<div class="c" style="right:1411.0px;top:581.0px;color:#3a5a88">203</div>
<div class="c" style="right:1153.0px;top:581.0px;color:#3a5a88">203</div>
<div class="c" style="right:1031.0px;top:581.0px;color:#3a5a88">203</div>
<div class="c" style="right:704.0px;top:581.0px;color:#3a5a88">-300</div>
<div class="c" style="right:572.0px;top:581.0px;color:#3a5a88">(97)</div>
<div class="c" style="right:85.0px;top:581.0px;color:#3a5a88">(97)</div>
<div class="c" style="left:15.0px;top:613.0px;width:120px;text-align:center;color:#3a5a88">804</div>
<div class="c" style="left:144.0px;top:613.0px;color:#3a5a88">Professional Services</div>
<div class="c" style="right:1153.0px;top:613.0px;color:#3a5a88">0</div>
<div class="c" style="right:1031.0px;top:613.0px;color:#3a5a88">0</div>
<div class="c" style="right:600.0px;top:613.0px;color:#3a5a88">-</div>
<div class="c" style="right:114.0px;top:613.0px;color:#3a5a88">-</div>
<div class="c" style="left:15.0px;top:645.0px;width:120px;text-align:center;color:#3a5a88">805</div>
<div class="c" style="left:144.0px;top:645.0px;color:#3a5a88">Other Travel and Training</div>
<div class="c" style="right:1153.0px;top:645.0px;color:#3a5a88">0</div>
<div class="c" style="right:1031.0px;top:645.0px;color:#3a5a88">0</div>
<div class="c" style="right:600.0px;top:645.0px;color:#3a5a88">-</div>
<div class="c" style="right:114.0px;top:645.0px;color:#3a5a88">-</div>
<div class="c" style="left:15.0px;top:677.0px;width:120px;text-align:center;color:#3a5a88">806</div>
<div class="c" style="left:144.0px;top:677.0px;color:#3a5a88">Advertising</div>
<div class="c" style="right:1153.0px;top:677.0px;color:#3a5a88">0</div>
<div class="c" style="right:1031.0px;top:677.0px;color:#3a5a88">0</div>
<div class="c" style="right:600.0px;top:677.0px;color:#3a5a88">-</div>
<div class="c" style="right:114.0px;top:677.0px;color:#3a5a88">-</div>
<div class="c" style="left:15.0px;top:709.0px;width:120px;text-align:center;color:#3a5a88">807</div>
<div class="c" style="left:144.0px;top:709.0px;color:#3a5a88">Printing &amp; Publishing</div>
<div class="c" style="right:1655.0px;top:709.0px;color:#3a5a88">138</div>
<div class="c" style="right:1533.0px;top:709.0px;color:#3a5a88">143</div>
<div class="c" style="right:1411.0px;top:709.0px;color:#3a5a88">149</div>
<div class="c" style="right:1153.0px;top:709.0px;color:#3a5a88">249</div>
<div class="c" style="right:1031.0px;top:709.0px;color:#3a5a88">249</div>
<div class="c" style="right:579.0px;top:709.0px;color:#3a5a88">249</div>
<div class="c" style="right:92.0px;top:709.0px;color:#3a5a88">249</div>
<div class="c" style="left:15.0px;top:741.0px;width:120px;text-align:center;color:#3a5a88">808</div>
<div class="c" style="left:144.0px;top:741.0px;color:#3a5a88">Utilities</div>
<div class="c" style="right:1655.0px;top:741.0px;color:#3a5a88">1,713</div>
<div class="c" style="right:1533.0px;top:741.0px;color:#3a5a88">1,781</div>
<div class="c" style="right:1411.0px;top:741.0px;color:#3a5a88">1,834</div>
<div class="c" style="right:1153.0px;top:741.0px;color:#3a5a88">1,834</div>
<div class="c" style="right:1031.0px;top:741.0px;color:#3a5a88">1,834</div>
<div class="c" style="right:579.0px;top:741.0px;color:#3a5a88">1,834</div>
<div class="c" style="right:92.0px;top:741.0px;color:#3a5a88">1,834</div>
<div class="c" style="left:15.0px;top:773.0px;width:120px;text-align:center;color:#3a5a88">809</div>
<div class="c" style="left:144.0px;top:773.0px;color:#3a5a88">Telephone</div>
<div class="c" style="right:1655.0px;top:773.0px;color:#3a5a88">388</div>
<div class="c" style="right:1533.0px;top:773.0px;color:#3a5a88">403</div>
<div class="c" style="right:1411.0px;top:773.0px;color:#3a5a88">417</div>
<div class="c" style="right:1153.0px;top:773.0px;color:#3a5a88">417</div>
<div class="c" style="right:1031.0px;top:773.0px;color:#3a5a88">417</div>
<div class="c" style="right:579.0px;top:773.0px;color:#3a5a88">417</div>
<div class="c" style="right:92.0px;top:773.0px;color:#3a5a88">417</div>
<div class="c" style="left:15.0px;top:805.0px;width:120px;text-align:center;color:#3a5a88">900</div>
<div class="c" style="left:144.0px;top:805.0px;color:#3a5a88">Capital</div>
<div class="c" style="right:1153.0px;top:805.0px;color:#3a5a88">0</div>
<div class="c" style="right:600.0px;top:805.0px;color:#3a5a88">-</div>
<div class="c" style="right:114.0px;top:805.0px;color:#3a5a88">-</div>
<div class="c" style="left:15.0px;top:837.0px;width:120px;text-align:center;color:#3a5a88">901</div>
<div class="c" style="left:144.0px;top:837.0px;color:#3a5a88">Rentals and Leases</div>
<div class="c" style="right:1655.0px;top:837.0px;color:#3a5a88">700</div>
<div class="c" style="right:1533.0px;top:837.0px;color:#3a5a88">728</div>
<div class="c" style="right:1411.0px;top:837.0px;color:#3a5a88">750</div>
<div class="c" style="right:1153.0px;top:837.0px;color:#3a5a88">1,450</div>
<div class="c" style="right:1031.0px;top:837.0px;color:#3a5a88">1,450</div>
<div class="c" style="right:704.0px;top:837.0px;color:#3a5a88">900</div>
<div class="c" style="right:579.0px;top:837.0px;color:#3a5a88">2,350</div>
<div class="c" style="right:92.0px;top:837.0px;color:#3a5a88">2,350</div>
<div class="c" style="left:15.0px;top:869.0px;width:120px;text-align:center;color:#3a5a88">902</div>
<div class="c" style="left:144.0px;top:869.0px;color:#3a5a88">Depreciation</div>
<div class="c" style="right:1655.0px;top:869.0px;color:#3a5a88">1,138</div>
<div class="c" style="right:1533.0px;top:869.0px;color:#3a5a88">1,183</div>
<div class="c" style="right:1411.0px;top:869.0px;color:#3a5a88">1,221</div>
<div class="c" style="right:1153.0px;top:869.0px;color:#3a5a88">1,221</div>
<div class="c" style="right:1031.0px;top:869.0px;color:#3a5a88">1,221</div>
<div class="c" style="right:579.0px;top:869.0px;color:#3a5a88">1,221</div>
<div class="c" style="right:92.0px;top:869.0px;color:#3a5a88">1,221</div>
<div class="c" style="left:15.0px;top:901.0px;width:120px;text-align:center;color:#3a5a88">903</div>
<div class="c" style="left:144.0px;top:901.0px;color:#3a5a88">Property Taxes</div>
<div class="c" style="right:1655.0px;top:901.0px;color:#3a5a88">10,563</div>
<div class="c" style="right:1533.0px;top:901.0px;color:#3a5a88">10,985</div>
<div class="c" style="right:1411.0px;top:901.0px;color:#3a5a88">11,325</div>
<div class="c" style="right:1153.0px;top:901.0px;color:#3a5a88">12,325</div>
<div class="c" style="right:1031.0px;top:901.0px;color:#3a5a88">12,325</div>
<div class="c" style="right:579.0px;top:901.0px;color:#3a5a88">12,325</div>
<div class="c" style="right:92.0px;top:901.0px;color:#3a5a88">12,325</div>
<div class="a" style="left:518.0px;top:964.5px;width:1780.0px;height:2.0px;background:#2b2b2b"></div>
<div class="a" style="left:8.0px;top:996.0px;width:2290.0px;height:2.0px;background:#2b2b2b"></div>
<div class="c" style="left:144.0px;top:965.5px;color:#2e4f80;font-weight:bold;font-size:20px;letter-spacing:-0.15px">Total Expenses</div>
<div class="c" style="right:1655.0px;top:965.5px;color:#2e4f80;font-weight:bold;font-size:21px;letter-spacing:-0.05px">119,706</div>
<div class="c" style="right:1533.0px;top:965.5px;color:#2e4f80;font-weight:bold;font-size:21px;letter-spacing:-0.05px">124,488</div>
<div class="c" style="right:1411.0px;top:965.5px;color:#2e4f80;font-weight:bold;font-size:21px;letter-spacing:-0.05px">128,333</div>
<div class="c" style="right:1289.0px;top:965.5px;color:#2e4f80;font-weight:bold;font-size:21px;letter-spacing:-0.05px">0</div>
<div class="c" style="right:1153.0px;top:965.5px;color:#2e4f80;font-weight:bold;font-size:21px;letter-spacing:-0.05px">143,405</div>
<div class="c" style="right:1031.0px;top:965.5px;color:#2e4f80;font-weight:bold;font-size:21px;letter-spacing:-0.05px">143,405</div>
<div class="c" style="right:704.0px;top:965.5px;color:#2e4f80;font-weight:bold;font-size:21px;letter-spacing:-0.05px">600</div>
<div class="c" style="right:572.0px;top:965.5px;color:#2e4f80;font-weight:bold;font-size:21px;letter-spacing:-0.05px">141,597</div>
<div class="c" style="right:226.0px;top:965.5px;color:#2e4f80;font-weight:bold;font-size:21px;letter-spacing:-0.05px">0</div>
<div class="c" style="right:85.0px;top:965.5px;color:#2e4f80;font-weight:bold;font-size:21px;letter-spacing:-0.05px">141,597</div>
<div class="a" style="left:8.0px;top:228.0px;width:2.0px;height:770.0px;background:#2b2b2b"></div>
<div class="a" style="left:882.5px;top:228.0px;width:2.0px;height:770.0px;background:#2b2b2b"></div>
<div class="a" style="left:1262.5px;top:228.0px;width:2.0px;height:770.0px;background:#2b2b2b"></div>
<div class="a" style="left:1722.0px;top:228.0px;width:2.0px;height:770.0px;background:#2b2b2b"></div>
<div class="a" style="left:2209.0px;top:228.0px;width:2.0px;height:770.0px;background:#2b2b2b"></div>

  </div>
  <!-- sheet right edge -->
  <div class="a" style="left:2289px;top:0;width:1.5px;height:1006px;background:#a8a8a8"></div>
  <!-- vertical scrollbar -->
  <div class="a" style="left:2291px;top:0;width:33px;height:1006px;background:#f0f0f0"></div>
  <div class="a" style="left:2297px;top:24px;width:22px;height:958px;background:#dedede"></div>
  <div class="a" style="left:2297px;top:1px;width:22.5px;height:23px;background:#fff;border:1.5px solid #a9a9a9;border-radius:2px"></div>
  <svg class="a" style="left:2302px;top:8px" width="12" height="8" viewBox="0 0 12 8"><path d="M1 7 L6 1.5 L11 7Z" fill="#555"/></svg>
  <div class="a" style="left:2297px;top:73px;width:22.5px;height:126px;background:#fff;border:1.5px solid #a9a9a9;border-radius:1px"></div>
  <div class="a" style="left:2297px;top:982px;width:22.5px;height:23px;background:#fff;border:1.5px solid #a9a9a9;border-radius:2px"></div>
  <svg class="a" style="left:2302px;top:990px" width="12" height="8" viewBox="0 0 12 8"><path d="M1 1 L6 6.5 L11 1Z" fill="#555"/></svg>
  <!-- tab bar -->
  <div class="a" style="left:0;top:1006px;width:2324px;height:43px;background:#e4e4e4;border-top:1.5px solid #b4b4b4"></div>
  <svg class="a" style="left:40px;top:1023px" width="10" height="12" viewBox="0 0 10 12"><path d="M8 1 L2 6 L8 11Z" fill="#c3c3c3"/></svg>
  <svg class="a" style="left:87px;top:1023px" width="10" height="12" viewBox="0 0 10 12"><path d="M2 1 L8 6 L2 11Z" fill="#c3c3c3"/></svg>
  <div class="a" style="left:159px;top:1006px;width:125px;height:39px;background:#fff;border:1px solid #b4b4b4;border-top:none;border-bottom:3px solid #217346"></div>
  <div class="a" style="left:180px;top:1011px;font-size:20.6px;line-height:28px;font-weight:bold;color:#217346;letter-spacing:-0.2px">DeptRev</div>
  <div class="a" style="left:676px;top:1021px;width:3px;height:3px;border-radius:50%;background:#999"></div>
  <div class="a" style="left:676px;top:1027px;width:3px;height:3px;border-radius:50%;background:#999"></div>
  <div class="a" style="left:676px;top:1033px;width:3px;height:3px;border-radius:50%;background:#999"></div>
  <!-- horizontal scrollbar -->
  <div class="a" style="left:702px;top:1017px;width:1588px;height:22px;background:#d9d9d9"></div>
  <div class="a" style="left:702px;top:1017px;width:22px;height:22.5px;background:#fff;border:1.5px solid #a9a9a9;border-radius:2px"></div>
  <svg class="a" style="left:708px;top:1022px" width="10" height="12" viewBox="0 0 10 12"><path d="M8 1 L2 6 L8 11Z" fill="#555"/></svg>
  <div class="a" style="left:723px;top:1017px;width:580px;height:22.5px;background:#fff;border:1.5px solid #a9a9a9;border-radius:2px"></div>
  <div class="a" style="left:2265px;top:1017px;width:23px;height:22.5px;background:#fff;border:1.5px solid #a9a9a9;border-radius:2px"></div>
  <svg class="a" style="left:2272px;top:1022px" width="10" height="12" viewBox="0 0 10 12"><path d="M2 1 L8 6 L2 11Z" fill="#555"/></svg>
</div>
<div class="a" style="left:198px;top:1355px;width:2324px;height:45px;background:#323a46;z-index:2">
  <div class="a" style="left:964px;top:10px;font-size:25.8px;line-height:30px;color:#fff;white-space:nowrap;letter-spacing:-0.35px">Spreading and Line item details</div>
  <svg class="a" style="left:1328px;top:14px" width="24" height="16" viewBox="0 0 24 16"><path d="M3 12.5 L12 4 L21 12.5" fill="none" stroke="#fff" stroke-width="3.6"/></svg>
</div>

</div></div></div>
</body></html>
